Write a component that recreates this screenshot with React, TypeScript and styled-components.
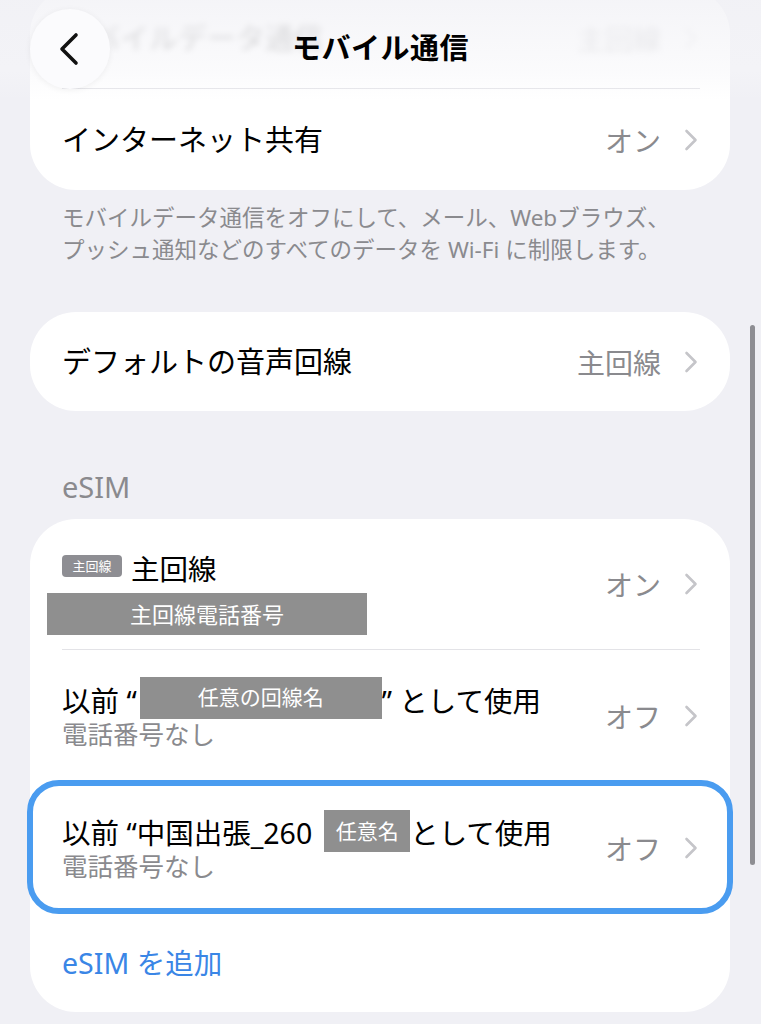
import React from 'react'
import styled, { createGlobalStyle } from 'styled-components'

const GlobalStyle = createGlobalStyle`
  html, body {
    margin: 0;
    padding: 0;
    background: #f0f0f5;
  }
  * {
    box-sizing: border-box;
  }
`

const Screen = styled.div`
  position: relative;
  width: 761px;
  height: 1024px;
  overflow: hidden;
  background: #f0f0f5;
  padding: 0 31px 0 30px;
  font-family: 'Noto Sans', 'Noto Sans CJK JP', sans-serif;
  color: #000;
`

const NavBar = styled.div`
  position: absolute;
  top: 0;
  left: 0;
  right: 0;
  height: 100px;
  display: flex;
  align-items: center;
  justify-content: center;
  background: linear-gradient(
    to bottom,
    rgba(242, 242, 246, 0.8) 0%,
    rgba(246, 246, 249, 0.5) 70%,
    rgba(255, 255, 255, 0) 100%
  );
`

const BackButton = styled.div`
  position: absolute;
  left: 30px;
  top: 9px;
  width: 80px;
  height: 80px;
  border-radius: 50%;
  background: #fbfbfd;
  box-shadow: 0 1px 6px rgba(0, 0, 0, 0.06);
  display: flex;
  align-items: center;
  justify-content: center;
`

const NavTitle = styled.div`
  font-size: 29px;
  font-weight: 700;
  line-height: 36px;
  margin-top: -4px;
  letter-spacing: 0.5px;
`

const Card = styled.div<{ $top?: boolean }>`
  background: #fff;
  border-radius: 46px;
  margin-top: ${({ $top }) => ($top ? '-12px' : '0')};
`

const Row = styled.div<{ $h?: number; $blur?: boolean }>`
  position: relative;
  display: flex;
  align-items: center;
  min-height: ${({ $h }) => $h ?? 100}px;
  padding: 0 32px;
  filter: ${({ $blur }) => ($blur ? 'blur(3px)' : 'none')};
  opacity: ${({ $blur }) => ($blur ? 0.35 : 1)};
`

const HighlightRow = styled(Row)`
  &::after {
    content: '';
    position: absolute;
    top: -2px;
    bottom: 0;
    left: -3px;
    right: -3px;
    border: 6px solid #4a9cf0;
    border-radius: 32px;
    pointer-events: none;
  }
`

const Separator = styled.div`
  height: 1px;
  background: #e3e3e7;
  margin: 0 30px 0 32px;
`

const Label = styled.div`
  flex: 1;
  font-size: 29px;
  line-height: 36px;
`

const Stack = styled.div<{ $pad?: string }>`
  flex: 1;
  display: flex;
  flex-direction: column;
  padding: ${({ $pad }) => $pad ?? '31px 0'};
`

const Title = styled.div`
  display: flex;
  align-items: center;
  height: 36px;
  font-size: 28.5px;
  white-space: pre;
`

const Subtitle = styled.div`
  font-size: 25.5px;
  line-height: 34px;
  color: #8a8a8e;
`

const Value = styled.div`
  display: flex;
  align-items: center;
  gap: 23px;
  font-size: 28px;
  color: #8a8a8e;
`

const Badge = styled.span`
  display: flex;
  align-items: center;
  justify-content: center;
  width: 60px;
  height: 22px;
  margin: 0 9px 2px 0;
  border-radius: 4px;
  background: #8e8e93;
  color: #fff;
  font-size: 13px;
  line-height: 1;
`

const Redact = styled.span<{ $w: number; $gap?: number }>`
  display: flex;
  flex-shrink: 0;
  align-items: center;
  justify-content: center;
  width: ${({ $w }) => $w}px;
  height: 42px;
  margin: 0 0 ${({ $w }) => ($w > 100 ? '3px' : '0')} ${({ $gap }) => $gap ?? 0}px;
  background: #8f8f8f;
  color: #fff;
  font-size: 21px;
  line-height: 1;
`

const RedactBlock = styled(Redact)`
  margin: 8px 0 0 -15px;
  font-size: 22px;
`

const Note = styled.div`
  padding: 12px 32px 0;
  font-size: 22.5px;
  line-height: 32px;
  color: #8a8a8e;
  margin-bottom: 46px;
`

const SectionHeader = styled.div`
  padding: 0 32px;
  margin: 60px 0 16px;
  font-size: 29px;
  line-height: 32px;
  color: #8a8a8e;
`

const LinkText = styled.div`
  font-size: 28.5px;
  line-height: 36px;
  color: #3a86e6;
`

const ScrollThumb = styled.div`
  position: absolute;
  left: 750px;
  top: 325px;
  width: 5px;
  height: 540px;
  border-radius: 3px;
  background: #8e8e93;
`

const Chevron = () => (
  <svg width="14" height="22" viewBox="0 0 14 22" fill="none">
    <path
      d="M2.5 2 L11.5 11 L2.5 20"
      stroke="#c5c5c9"
      strokeWidth="2.6"
      strokeLinecap="round"
      strokeLinejoin="round"
    />
  </svg>
)

const BackIcon = () => (
  <svg width="26" height="34" viewBox="0 0 26 34" fill="none">
    <path
      d="M19 3 L5 17 L19 31"
      stroke="#111"
      strokeWidth="3.6"
      strokeLinecap="round"
      strokeLinejoin="round"
    />
  </svg>
)

const Trailing: React.FC<{ text: string }> = ({ text }) => (
  <Value>
    {text}
    <Chevron />
  </Value>
)

export default function App() {
  return (
    <>
      <GlobalStyle />
      <Screen>
        <Card $top>
          <Row $blur>
            <Label>モバイルデータ通信</Label>
            <Trailing text="主回線" />
          </Row>
          <Separator />
          <Row $h={101}>
            <Label>インターネット共有</Label>
            <Trailing text="オン" />
          </Row>
        </Card>

        <Note>
          モバイルデータ通信をオフにして、メール、Webブラウズ、
          <br />
          プッシュ通知などのすべてのデータを Wi-Fi に制限します。
        </Note>

        <Card>
          <Row $h={99}>
            <Label>デフォルトの音声回線</Label>
            <Trailing text="主回線" />
          </Row>
        </Card>

        <SectionHeader>eSIM</SectionHeader>

        <Card>
          <Row $h={130}>
            <Stack $pad="30px 0 14px">
              <Title>
                <Badge>主回線</Badge>主回線
              </Title>
              <RedactBlock $w={320}>主回線電話番号</RedactBlock>
            </Stack>
            <Trailing text="オン" />
          </Row>
          <Separator />
          <Row $h={131}>
            <Stack>
              <Title>
                {'以前 “'}
                <Redact $w={242} $gap={3}>任意の回線名</Redact>
                {'” として使用'}
              </Title>
              <Subtitle>電話番号なし</Subtitle>
            </Stack>
            <Trailing text="オフ" />
          </Row>
          <HighlightRow $h={132}>
            <Stack>
              <Title>
                {'以前 “中国出張_260'}
                <Redact $w={86} $gap={12}>任意名</Redact>
                {'として使用'}
              </Title>
              <Subtitle>電話番号なし</Subtitle>
            </Stack>
            <Trailing text="オフ" />
          </HighlightRow>
          <Row $h={98}>
            <LinkText>eSIM を追加</LinkText>
          </Row>
        </Card>

        <NavBar>
          <BackButton>
            <BackIcon />
          </BackButton>
          <NavTitle>モバイル通信</NavTitle>
        </NavBar>
        <ScrollThumb />
      </Screen>
    </>
  )
}
